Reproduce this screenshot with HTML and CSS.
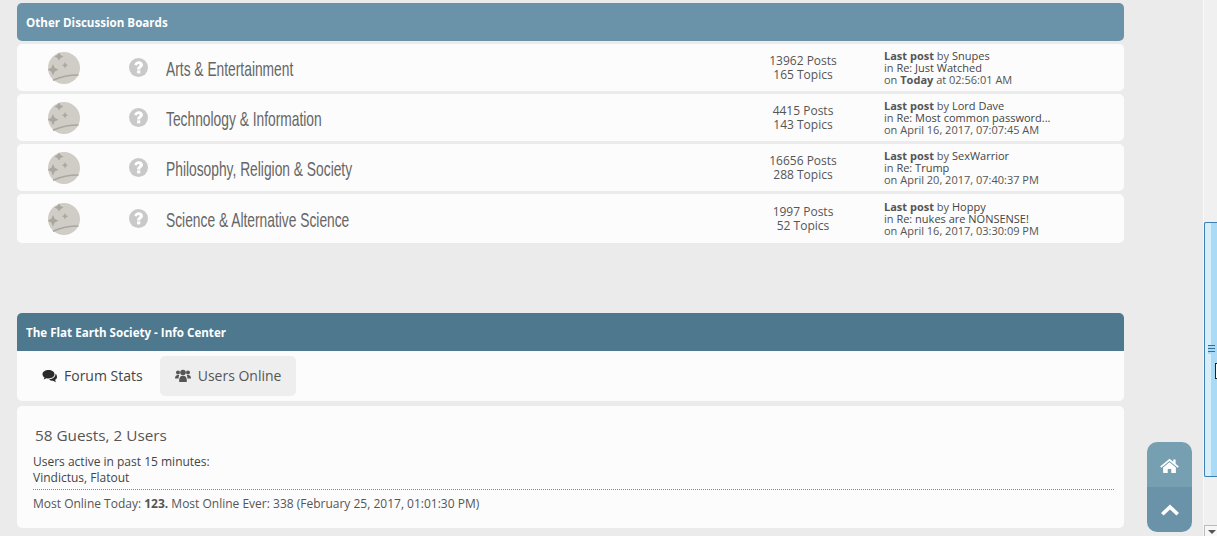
FILE: index.html
```html
<!DOCTYPE html>
<html lang="en">
<head>
<meta charset="utf-8">
<title>The Flat Earth Society - Info Center</title>
<link rel="stylesheet" href="styles.css">
</head>
<body>
<svg class="defs" width="0" height="0" aria-hidden="true">
  <symbol id="board" viewBox="0 0 32 32">
    <circle cx="16" cy="16" r="16" fill="#cfcdc6"/>
    <path d="M11 .5 12.600 3 15.500 4.500 12.600 6 11 8.500 9.400 6 6.500 4.500 9.400 3Z" fill="#a9a79f"/>
    <path d="M5 12 6.700 15.800 10.500 17.700 6.700 19.600 5 23.500 3.300 19.600-.5 17.700 3.300 15.800Z" fill="#a9a79f"/>
    <path d="M17 10 18 12.200 20.200 13.200 18 14.200 17 16.400 16 14.200 13.800 13.200 16 12.200Z" fill="#a9a79f"/>
    <path d="M5 28.300C12 25 21 23 30.500 23" fill="none" stroke="#a9a79f" stroke-width="1.500"/>
  </symbol>
  <symbol id="question" viewBox="0 0 20 20">
    <circle cx="10" cy="10" r="10" fill="#c9c9c9"/>
    <path d="M5.600 7.300C6.100 4.500 7.900 3.300 10.200 3.300 12.800 3.300 14.700 5 14.700 7.100 14.700 10 11.900 10.100 11.900 12H8.500C8.500 8.900 11.100 8.800 11.100 7.400 11.100 6.800 10.700 6.400 10.100 6.400 9.300 6.400 8.900 6.900 8.400 7.900Z" fill="#fff"/>
    <rect x="8.500" y="13" width="3.400" height="3.200" fill="#fff"/>
  </symbol>
</svg>

<main class="page">
  <section class="category">
    <h2 class="cat-bar cat-bar-light">Other Discussion Boards</h2>
    <div class="board">
      <svg class="board-icon"><use href="#board"/></svg>
      <svg class="help-icon"><use href="#question"/></svg>
      <h3 class="board-title"><span class="board-title-text">Arts &amp; Entertainment</span></h3>
      <p class="stats"><span>13962 Posts</span><span>165 Topics</span></p>
      <p class="lastpost"><span><b>Last post</b> by <i class="ink">Snupes</i></span><span>in <i class="ink">Re: Just Watched</i></span><span>on <b>Today</b> at 02:56:01 AM</span></p>
    </div>
    <div class="board">
      <svg class="board-icon"><use href="#board"/></svg>
      <svg class="help-icon"><use href="#question"/></svg>
      <h3 class="board-title"><span class="board-title-text">Technology &amp; Information</span></h3>
      <p class="stats"><span>4415 Posts</span><span>143 Topics</span></p>
      <p class="lastpost"><span><b>Last post</b> by <i class="ink">Lord Dave</i></span><span>in <i class="ink">Re: Most common password...</i></span><span>on April 16, 2017, 07:07:45 AM</span></p>
    </div>
    <div class="board">
      <svg class="board-icon"><use href="#board"/></svg>
      <svg class="help-icon"><use href="#question"/></svg>
      <h3 class="board-title"><span class="board-title-text">Philosophy, Religion &amp; Society</span></h3>
      <p class="stats"><span>16656 Posts</span><span>288 Topics</span></p>
      <p class="lastpost"><span><b>Last post</b> by <i class="ink">SexWarrior</i></span><span>in <i class="ink">Re: Trump</i></span><span>on April 20, 2017, 07:40:37 PM</span></p>
    </div>
    <div class="board">
      <svg class="board-icon"><use href="#board"/></svg>
      <svg class="help-icon"><use href="#question"/></svg>
      <h3 class="board-title"><span class="board-title-text">Science &amp; Alternative Science</span></h3>
      <p class="stats"><span>1997 Posts</span><span>52 Topics</span></p>
      <p class="lastpost"><span><b>Last post</b> by <i class="ink">Hoppy</i></span><span>in <i class="ink">Re: nukes are NONSENSE!</i></span><span>on April 16, 2017, 03:30:09 PM</span></p>
    </div>
  </section>

  <section class="info">
    <h2 class="cat-bar cat-bar-dark">The Flat Earth Society - Info Center</h2>
    <div class="tabs">
      <a class="tab">
        <svg class="tab-icon" viewBox="0 0 16 14"><path d="M6.500 1C3 1 .5 2.900.5 5.200c0 1.300.8 2.500 2 3.300L1.600 10.600 4.500 9.200c.6.100 1.300.2 2 .2 3.500 0 6-1.900 6-4.200S10 1 6.500 1Z" fill="#2b2b2b"/><path d="M13.500 4.800c.2 2.900-2.500 5.300-6.400 5.500.9 1 2.300 1.500 3.900 1.500l2.900 1.400-.8-2.200c1.200-.7 1.900-1.700 1.900-2.900 0-1.500-.6-2.600-1.500-3.300Z" fill="#2b2b2b"/></svg>
        <span class="tab-label">Forum Stats</span>
      </a>
      <a class="tab tab-active">
        <svg class="tab-icon" viewBox="0 0 16 14"><circle cx="3" cy="3.500" r="2" fill="#555"/><circle cx="13" cy="3.500" r="2" fill="#555"/><circle cx="8" cy="3.500" r="2.800" fill="#555"/><path d="M0 9.500C0 7 1.200 6 3 6c.5 0 1 .1 1.300.3-.5.800-.8 1.900-.8 3.200H0ZM16 9.500C16 7 14.800 6 13 6c-.5 0-1 .1-1.300.3.500.8.800 1.900.8 3.200H16ZM4.500 13c-.3-.3-.4-.7-.4-1.100 0-3.300 1.200-5.100 3.900-5.100s3.900 1.800 3.900 5.100c0 .4-.1.800-.4 1.100Z" fill="#555"/></svg>
        <span class="tab-label">Users Online</span>
      </a>
    </div>
    <div class="online">
      <h4 class="online-count">58 Guests, 2 Users</h4>
      <p class="online-text"><span>Users active in past 15 minutes:</span><span class="ink">Vindictus, Flatout</span></p>
      <p class="online-most">Most Online Today: <b>123.</b> Most Online Ever: 338 (February 25, 2017, 01:01:30 PM)</p>
    </div>
  </section>
</main>

<nav class="quick">
  <a class="quick-btn quick-home">
    <svg class="quick-home-icon" viewBox="0 0 20 16" width="19" height="15"><path d="M10 .8 0 9l1.200 1.300L10 3.100l8.800 7.200L20 9l-3.500-2.900V1.500h-2.500v2.500Z" fill="#fff"/><path d="M10 4.400 3.200 10v6h4.900v-4.300h3.800V16h4.900v-6Z" fill="#fff"/></svg>
  </a>
  <a class="quick-btn quick-top">
    <svg viewBox="0 0 18 12" width="18" height="12"><path d="M9 .5 18 9l-2.600 2.600L9 5.500 2.600 11.600 0 9Z" fill="#fff"/></svg>
  </a>
</nav>

<aside class="scrollbar" aria-hidden="true">
  <div class="scroll-thumb"><span class="scroll-grip"></span></div>
  <div class="scroll-down"></div>
  <div class="cursor"></div>
</aside>
</body>
</html>
```

FILE: styles.css
```css
* { box-sizing: border-box; }

html, body { height: 100%; }

body {
  margin: 0;
  overflow: hidden;
  background: #ebebeb;
  color: #555;
  font-family: "Open Sans", "Liberation Sans", sans-serif;
  font-size: 11px;
}

h2, h3, h4, p { margin: 0; }

i { font-style: normal; }

.defs { position: absolute; }

.page {
  width: 1107px;
  margin-left: 17px;
  padding-top: 3px;
}

.category { display: flex; flex-direction: column; gap: 3px; }

.cat-bar {
  display: flex;
  align-items: center;
  height: 38px;
  padding-left: 9px;
  border-radius: 5px 5px 0 0;
  color: #fff;
  font-size: 11.600px;
  font-weight: 700;
}

.cat-bar-light { background: #6a93a9; border-radius: 5px; }
.cat-bar-dark { background: #4d788e; }

.board {
  display: flex;
  align-items: center;
  height: 47px;
  background: #fcfcfc;
  border-radius: 5px;
}

.board:last-child { height: 49px; }

.board-icon { width: 32px; height: 32px; margin-left: 31px; flex: none; }
.help-icon { width: 19px; height: 19px; margin-left: 49px; flex: none; }

.board-title {
  width: 560px;
  margin-left: 18px;
  padding-top: 2px;
  flex: none;
  font-weight: 400;
}

.board-title-text {
  display: inline-block;
  color: #666;
  font-family: "Liberation Sans", sans-serif;
  font-size: 21px;
  line-height: 24px;
  white-space: nowrap;
  transform: scaleX(0.657);
  transform-origin: left center;
}

.stats {
  width: 130px;
  margin-left: 12px;
  flex: none;
  color: #555;
  font-size: 12px;
  text-align: center;
}

.stats span { display: block; height: 14px; line-height: 14px; }

.lastpost {
  margin-left: 16px;
  font-size: 11px;
}

.lastpost span { display: block; height: 12px; line-height: 12px; }

.ink { color: #444; }

.info { margin-top: 70px; }

.tabs {
  display: flex;
  gap: 2px;
  height: 50px;
  padding: 5px 0 0 10px;
  background: #fcfcfc;
  border-radius: 0 0 5px 5px;
}

.tab {
  display: flex;
  align-items: center;
  gap: 6px;
  height: 40px;
  padding: 0 15px;
  color: #444;
  font-size: 14px;
  border-radius: 5px;
}

.tab-active { gap: 7px; background: #eeeeee; color: #555; }

.tab-icon { width: 16px; height: 14px; }

.tab-label { margin-top: -2px; }

.online {
  margin-top: 5px;
  height: 122px;
  padding: 19px 10px 0 16px;
  background: #fcfcfc;
  border-radius: 5px;
}

.online-count {
  padding-left: 2px;
  font-size: 15.300px;
  font-weight: 400;
  line-height: 20px;
}

.online-text {
  margin-top: 9px;
  padding-bottom: 3px;
  border-bottom: 1px dotted #888;
  font-size: 12px;
  color: #444;
}

.online-text span { display: block; height: 16px; line-height: 16px; }

.online-most {
  margin-top: 5px;
  font-size: 12px;
  line-height: 17px;
  color: #555;
}

.quick {
  position: fixed;
  left: 1147px;
  top: 442px;
  width: 45px;
  height: 90px;
  border-radius: 10px;
  overflow: hidden;
}

.quick-btn {
  display: flex;
  align-items: center;
  justify-content: center;
  height: 45px;
}

.quick-home { background: #779fb2; }
.quick-top { background: #6a93a9; }
.quick-home-icon { margin-top: 2px; }

.scrollbar {
  position: fixed;
  right: 0;
  top: 0;
  bottom: 0;
  width: 14px;
  background: #f0f0f0;
  border-left: 1px solid #f8f8f8;
}

.scroll-thumb {
  position: absolute;
  left: 0;
  top: 222px;
  width: 14px;
  height: 255px;
  display: flex;
  align-items: center;
  justify-content: center;
  background: linear-gradient(to right, #d9eefb 0 42%, #a9dbf6 50% 100%);
  border: 1px solid #3c7fb1;
  border-right: 0;
  border-radius: 2px 0 0 2px;
}

.scroll-grip {
  width: 7px;
  height: 9px;
  background: repeating-linear-gradient(to bottom, #2f6f99 0 1px, #a9dbf6 1px 3px);
}

.scroll-down {
  position: absolute;
  left: 0;
  bottom: 0;
  width: 14px;
  height: 11px;
  background: #f7f7f7;
  border: 1px solid #bbb;
  border-width: 1px 0 0 1px;
}

.scroll-down::after {
  content: "";
  position: absolute;
  left: 3px;
  top: 4px;
  border: 4px solid transparent;
  border-top-color: #555;
  border-bottom: 0;
}

.cursor {
  position: absolute;
  left: 11px;
  top: 363px;
  width: 3px;
  height: 16px;
  border: 1px solid #222;
  border-right: 0;
  background: #fff;
}
```
